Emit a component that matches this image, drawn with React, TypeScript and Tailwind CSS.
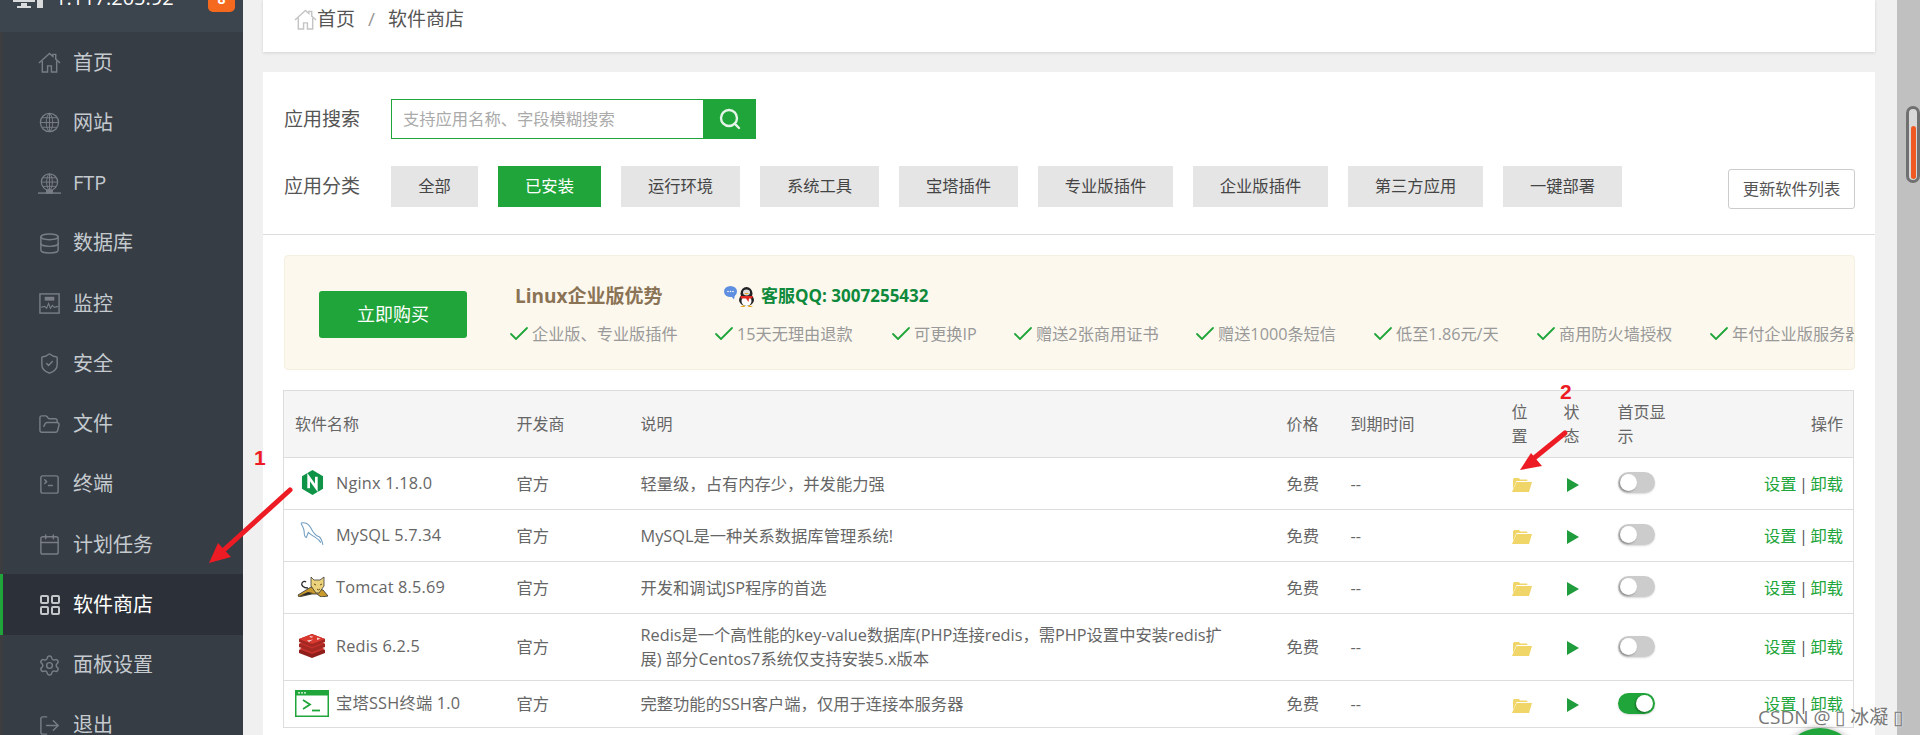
import type { ReactNode } from 'react'
import { Check, Database, FolderOpen, LayoutGrid, LogOut, Search, Settings, ShieldCheck, SquareTerminal, Calendar } from 'lucide-react'

const iconCls = 'w-[23px] h-[23px] text-[#787e84]'

function HomeIcon({ className }: { className: string }) {
  return (
    <svg viewBox="0 0 24 24" className={className} fill="none" stroke="currentColor" strokeWidth="1.5">
      <path d="M1 12.500L12 2.500l3.500 3.200V3.500h3v5L23 12.500" />
      <path d="M4.500 10.500V22H10v-6.500h4V22h5.500V10.500" />
    </svg>
  )
}

function GlobeIcon() {
  return (
    <svg viewBox="0 0 24 24" className={iconCls} fill="none" stroke="currentColor" strokeWidth="1.300">
      <circle cx="12" cy="12" r="9.500" />
      <path d="M12 2.500c-4.500 3-4.500 16 0 19M12 2.500c4.500 3 4.500 16 0 19M12 2.500v19M2.500 12h19M4 7h16M4 17h16" strokeWidth="1" />
    </svg>
  )
}

function FtpIcon() {
  return (
    <svg viewBox="0 0 24 24" className={iconCls} fill="none" stroke="currentColor" strokeWidth="1.300">
      <circle cx="12" cy="10.500" r="8.500" />
      <path d="M12 2c-4 2.500-4 14.500 0 17M12 2c4 2.500 4 14.500 0 17M12 2v17M3.500 10.500h17M5 6h14M5 15h14" strokeWidth="1" />
      <path d="M0 22h24" strokeWidth="1.500" />
      <path d="M9 19.500h6v2.500H9z" fill="currentColor" />
    </svg>
  )
}

function MonitorIcon() {
  return (
    <svg viewBox="0 0 24 24" className={iconCls} fill="none" stroke="currentColor" strokeWidth="1.500">
      <rect x="2" y="2" width="20" height="20" />
      <path d="M7 5h10v4H7z" fill="currentColor" stroke="none" />
      <path d="M3 16l4-1 2 2 2-5 2 5 2-3 2 2 4-1" strokeWidth="1.100" />
    </svg>
  )
}

const menu: { label: string; icon: ReactNode; active?: boolean }[] = [
  { label: '首页', icon: <HomeIcon className={iconCls} /> },
  { label: '网站', icon: <GlobeIcon /> },
  { label: 'FTP', icon: <FtpIcon /> },
  { label: '数据库', icon: <Database className={iconCls} strokeWidth={1.5} /> },
  { label: '监控', icon: <MonitorIcon /> },
  { label: '安全', icon: <ShieldCheck className={iconCls} strokeWidth={1.5} /> },
  { label: '文件', icon: <FolderOpen className={iconCls} strokeWidth={1.5} /> },
  { label: '终端', icon: <SquareTerminal className={iconCls} strokeWidth={1.5} /> },
  { label: '计划任务', icon: <Calendar className={iconCls} strokeWidth={1.5} /> },
  { label: '软件商店', icon: <LayoutGrid className="w-[24px] h-[24px] text-[#c4c7ca]" strokeWidth={2} />, active: true },
  { label: '面板设置', icon: <Settings className={iconCls} strokeWidth={1.5} /> },
  { label: '退出', icon: <LogOut className={iconCls} strokeWidth={1.5} /> },
]

const categories = [
  { label: '全部', w: 'w-[87px]' },
  { label: '已安装', w: 'w-[103px]' },
  { label: '运行环境', w: 'w-[119px]' },
  { label: '系统工具', w: 'w-[119px]' },
  { label: '宝塔插件', w: 'w-[119px]' },
  { label: '专业版插件', w: 'w-[135px]' },
  { label: '企业版插件', w: 'w-[135px]' },
  { label: '第三方应用', w: 'w-[135px]' },
  { label: '一键部署', w: 'w-[119px]' },
]

const perks = [
  { text: '企业版、专业版插件', w: 'w-[205px]' },
  { text: '15天无理由退款', w: 'w-[177px]' },
  { text: '可更换IP', w: 'w-[122px]' },
  { text: '赠送2张商用证书', w: 'w-[182px]' },
  { text: '赠送1000条短信', w: 'w-[178px]' },
  { text: '低至1.86元/天', w: 'w-[163px]' },
  { text: '商用防火墙授权', w: 'w-[173px]' },
  { text: '年付企业版服务器', w: 'w-[170px]' },
]

function NginxLogo() {
  return (
    <svg viewBox="0 0 24 26" className="w-[23px] h-[25px]">
      <path d="M12 0l11 6.500v13L12 26 1 19.500v-13z" fill="#0f9447" />
      <path d="M8 19V7.500L16 18.500V7" fill="none" stroke="#fff" strokeWidth="2.800" />
    </svg>
  )
}

function MysqlLogo() {
  return (
    <svg viewBox="0 0 24 24" className="w-[25px] h-[25px]" fill="none" stroke="#6f9cc0" strokeWidth="1">
      <path d="M1 1C4 0 8 1 10 5c2 4 4 8 8 9 2 1 3 3 4 8" />
      <path d="M1 1c1 3 3 5 3 8 0 3 0 5 2 6 1-2 1-3 2-5 2 2 4 3 7 5 2 1 4 3 5 5" />
    </svg>
  )
}

function TomcatLogo() {
  return (
    <svg viewBox="0 0 31 21" className="w-[31px] h-[21px]">
      <path d="M11 12C6 12 4 9 5 7c1-2 3-2 4-1" fill="none" stroke="#2b2b2b" strokeWidth="1.300" />
      <path d="M14 11L1 19l1 2 8-2 5-1 5 0 4 3 7-1-5-6z" fill="#c99a2c" stroke="#2b2b2b" strokeWidth="0.800" />
      <path d="M2 20l9-4 5 1-6 2z" fill="#2b2b2b" />
      <path d="M14 1l3 3h6l4-3v9l-5 7-3 0-5-7z" fill="#ecd27c" stroke="#3a3a3a" strokeWidth="0.800" />
      <path d="M17 8l2 1M25 8l-2 1M20 13l1.500 1 1.500-1" fill="none" stroke="#5a4510" strokeWidth="0.900" />
    </svg>
  )
}

function RedisLogo() {
  return (
    <svg viewBox="0 0 28 24" className="w-[28px] h-[24px]">
      <path d="M1 16l13-5 13 5v3l-13 5L1 19z" fill="#8f1f1a" />
      <path d="M1 15l13-5 13 5-13 5z" fill="#c6302b" />
      <path d="M1 10l13-5 13 5v3l-13 5-13-5z" fill="#a32722" />
      <path d="M1 9.500l13-5 13 5-13 5z" fill="#c6302b" />
      <path d="M1 5l13-5 13 5v3l-13 5L1 8z" fill="#a32722" />
      <path d="M1 5l13-5 13 5-13 5z" fill="#d9382f" />
      <path d="M12 2l3 .6-1 1.200-2.500-.8zM9 6.500l6-1-4 2.500zM19 3.500l3.500 1.300-3.500 1.300z" fill="#f4d4d1" />
    </svg>
  )
}

function SshLogo() {
  return (
    <svg viewBox="0 0 34 27" className="w-[34px] h-[27px]">
      <rect x="0.750" y="0.750" width="32.500" height="25.500" fill="#fff" stroke="#20a53a" strokeWidth="1.500" />
      <rect x="0" y="0" width="34" height="5.500" fill="#20a53a" />
      <circle cx="4" cy="2.800" r="0.900" fill="#fff" />
      <circle cx="7" cy="2.800" r="0.900" fill="#fff" />
      <circle cx="10" cy="2.800" r="0.900" fill="#fff" />
      <path d="M8 10l7 4.500-7 4.500" fill="none" stroke="#20a53a" strokeWidth="1.800" />
      <path d="M17 20.500h8" stroke="#20a53a" strokeWidth="1.800" />
    </svg>
  )
}

function QqIcon() {
  return (
    <svg viewBox="0 0 31 21" className="w-[31px] h-[21px]">
      <ellipse cx="6.500" cy="5.500" rx="6.500" ry="5.500" fill="#5f8fe0" />
      <path d="M7 10l3 3.500 1-5z" fill="#5f8fe0" />
      <circle cx="4" cy="5.500" r="0.800" fill="#fff" />
      <circle cx="6.500" cy="5.500" r="0.800" fill="#fff" />
      <circle cx="9" cy="5.500" r="0.800" fill="#fff" />
      <ellipse cx="22.500" cy="7.500" rx="6" ry="6.500" fill="#222" />
      <ellipse cx="22.500" cy="14" rx="7.500" ry="6" fill="#222" />
      <ellipse cx="22.500" cy="15" rx="5" ry="5" fill="#fff" />
      <ellipse cx="22.500" cy="6.500" rx="3.500" ry="3" fill="#ddd" />
      <path d="M22.500 8.500l-2.500-1.500h5z" fill="#e8a51c" />
      <path d="M16 10h13l-1 2.500h-3l-.5 3.500-2.500-3.500h-5z" fill="#e02a1f" />
      <path d="M16 21l4-2 1 2zM29 21l-4-2-1 2z" fill="#e8a51c" />
    </svg>
  )
}

function FolderIcon() {
  return (
    <svg viewBox="0 0 20 15" className="w-[20px] h-[15px]">
      <path d="M1 12L1 2.500 2 1h5l1 1.500h7L15.500 4H4.500z" fill="#f0d668" />
      <path d="M4.500 5H20l-3 10H0z" fill="#f0d668" />
    </svg>
  )
}

function Play() {
  return (
    <svg viewBox="0 0 12 14" className="w-[12px] h-[14px]">
      <path d="M0 0l12 7-12 7z" fill="#1f9d3d" />
    </svg>
  )
}

function Toggle({ on }: { on?: boolean }) {
  return (
    <div className={`relative w-[37px] h-[21px] rounded-full -mt-[2px] shadow-[0_1px_2px_rgba(0,0,0,0.15)] ${on ? 'bg-[#20a53a]' : 'bg-[#cccccc]'}`}>
      <div className={`absolute top-[2px] w-[17px] h-[17px] rounded-full bg-white shadow-[-1px_1px_2px_rgba(0,0,0,0.35)] ${on ? 'right-[2px]' : 'left-[2px]'}`} />
    </div>
  )
}

const rows = [
  { logo: <NginxLogo />, name: 'Nginx 1.18.0', desc: '轻量级，占有内存少，并发能力强', h: 'h-[52px]' },
  { logo: <MysqlLogo />, name: 'MySQL 5.7.34', desc: 'MySQL是一种关系数据库管理系统!', h: 'h-[52px]' },
  { logo: <TomcatLogo />, name: 'Tomcat 8.5.69', desc: '开发和调试JSP程序的首选', h: 'h-[52px]' },
  {
    logo: <RedisLogo />,
    name: 'Redis 6.2.5',
    desc: 'Redis是一个高性能的key-value数据库(PHP连接redis，需PHP设置中安装redis扩展) 部分Centos7系统仅支持安装5.x版本',
    h: 'h-[67px]',
  },
  { logo: <SshLogo />, name: '宝塔SSH终端 1.0', desc: '完整功能的SSH客户端，仅用于连接本服务器', h: 'h-[47px]', on: true },
]

const th = 'pl-[11px] pr-[10px] font-normal text-left text-[#666666] text-[16px] leading-[24px] align-middle'
const cell = 'pl-[11px] pr-[10px] text-[16.3px] leading-[24px] align-middle'
const td = `${cell} text-[#666666]`

export default function App() {
  return (
    <div className="relative flex h-[735px] w-full overflow-hidden bg-[#f0f0f0] font-['Open_Sans','Noto_Sans_CJK_SC',sans-serif]">
      <aside className="w-[243px] shrink-0 bg-[#363d45] border-l-[3px] border-[#3b3d3e] flex flex-col">
        <div className="h-[32px] shrink-0 -ml-[3px] bg-[#3c444d] overflow-hidden">
          <div className="flex items-center h-[32px] -mt-[18px] pl-[13px] pr-[8px]">
            <svg viewBox="0 0 30 24" className="w-[30px] h-[24px] -mt-[1px] text-[#d8dadc]" fill="currentColor">
              <path d="M0 1h22v15H0zM2 3v11h18V3zM8 17h6v3h4v2H4v-2h4zM24 1h6v21h-6z" />
            </svg>
            <span className="ml-[12px] text-[20px] leading-[28px] text-white">1.117.205.92</span>
            <span className="ml-auto w-[27px] h-[27px] rounded-[5px] bg-[#f5691f] text-white text-[14px] font-bold flex items-center justify-center">8</span>
          </div>
        </div>
        {menu.map(item => (
          <div
            key={item.label}
            className={`h-[60.25px] shrink-0 flex items-center pl-[35px] pt-[1px] relative ${item.active ? 'bg-[#2c3038] text-white' : 'text-[#c5cacf]'}`}
          >
            {item.active && <div className="absolute -left-[3px] top-0 bottom-0 w-[3px] bg-[#20a53a]" />}
            <span className="w-[35px] flex shrink-0">{item.icon}</span>
            <span className="text-[20px] leading-[28px]">{item.label}</span>
          </div>
        ))}
      </aside>

      <main className="ml-[20px] w-[1612px] shrink-0 flex flex-col gap-[20px]">
        <div className="h-[52px] shrink-0 bg-white shadow-[0_1px_3px_rgba(0,0,0,0.12)] flex items-center pl-[31px] pb-[14px] text-[19px] text-[#555555]">
          <HomeIcon className="w-[23px] h-[23px] text-[#c4c4c4]" />
          <span>首页</span>
          <span className="mx-[13px] text-[#999999]">/</span>
          <span>软件商店</span>
        </div>

        <div className="flex-1 bg-white">
          <div className="border-b border-[#dddddd] h-[163px] pt-[27px]">
            <div className="flex items-center pl-[21px]">
              <span className="w-[107px] text-[19px] text-[#555555]">应用搜索</span>
              <div className="flex h-[40px]">
                <div className="w-[313px] border border-[#20a53a] flex items-center pl-[11px] text-[16.3px] text-[#aaaaaa]">支持应用名称、字段模糊搜索</div>
                <div className="w-[52px] bg-[#20a53a] flex items-center justify-center">
                  <Search className="w-[24px] h-[24px] text-[#e6f5e9]" strokeWidth={2.4} />
                </div>
              </div>
            </div>
            <div className="flex mt-[27px] pl-[21px] pr-[20px]">
              <span className="w-[107px] text-[19px] leading-[41px] text-[#555555]">应用分类</span>
              <div className="flex gap-[20px]">
                {categories.map(c => (
                  <div
                    key={c.label}
                    className={`${c.w} h-[41px] flex items-center justify-center text-[16.3px] ${c.label === '已安装' ? 'bg-[#20a53a] text-white' : 'bg-[#e5e5e5] text-[#444444]'}`}
                  >
                    {c.label}
                  </div>
                ))}
              </div>
              <div className="ml-auto mt-[3px] w-[127px] h-[40px] rounded-[3px] border border-[#cccccc] flex items-center justify-center text-[16.3px] text-[#555555]">
                更新软件列表
              </div>
            </div>
          </div>

          <div className="ml-[21px] mr-[20px] mt-[20px] h-[115px] rounded-[4px] border border-[#f5efe0] bg-[#fcf8ee] flex overflow-hidden">
            <div className="ml-[34px] mt-[35px] w-[148px] h-[47px] shrink-0 rounded-[3px] bg-[#20a53a] text-white text-[18px] flex items-center justify-center">立即购买</div>
            <div className="ml-[42px] min-w-0 flex-1">
              <div className="flex items-center mt-[22px] h-[36px] pl-[6px]">
                <span className="w-[209px] text-[19px] font-bold text-[#8b7355]">Linux企业版优势</span>
                <QqIcon />
                <span className="ml-[6px] text-[17px] font-bold text-[#0f8a3c]">客服QQ: 3007255432</span>
              </div>
              <div className="flex mt-[8px] whitespace-nowrap">
                {perks.map(p => (
                  <div key={p.text} className={`${p.w} flex items-center shrink-0 text-[16.2px] text-[#999999]`}>
                    <Check className="w-[24px] h-[24px] text-[#20a53a] -ml-[2px] mr-[1px]" strokeWidth={1.8} />
                    {p.text}
                  </div>
                ))}
              </div>
            </div>
          </div>

          <table className="ml-[20px] mt-[20px] w-[1570px] table-fixed border-collapse border border-[#dddddd]">
            <colgroup>
              <col className="w-[222px]" />
              <col className="w-[124px]" />
              <col className="w-[646px]" />
              <col className="w-[64px]" />
              <col className="w-[161px]" />
              <col className="w-[52px]" />
              <col className="w-[54px]" />
              <col className="w-[123px]" />
              <col className="w-[124px]" />
            </colgroup>
            <thead>
              <tr className="h-[67px] bg-[#f5f5f5] border-b border-[#dddddd]">
                <th className={th}>软件名称</th>
                <th className={th}>开发商</th>
                <th className={th}>说明</th>
                <th className={th}>价格</th>
                <th className={th}>到期时间</th>
                <th className={th}><div className="w-[16px]">位置</div></th>
                <th className={th}><div className="w-[16px]">状态</div></th>
                <th className={th}><div className="w-[50px]">首页显示</div></th>
                <th className={`${th} text-right`}>操作</th>
              </tr>
            </thead>
            <tbody>
              {rows.map(r => (
                <tr key={r.name} className={`${r.h} border-b border-[#dddddd]`}>
                  <td className={td}>
                    <div className="flex items-center tracking-[0.2px] -mt-[2px]">
                      <span className="w-[34px] mr-[7px] flex justify-center shrink-0">{r.logo}</span>
                      <span className="whitespace-nowrap">{r.name}</span>
                    </div>
                  </td>
                  <td className={td}>官方</td>
                  <td className={td}><div className="max-w-[590px]">{r.desc}</div></td>
                  <td className={td}>免费</td>
                  <td className={td}>--</td>
                  <td className={td}><div className="mt-[2px]"><FolderIcon /></div></td>
                  <td className={td}><div className="pl-[3px] mt-[2px]"><Play /></div></td>
                  <td className={td}><Toggle on={r.on} /></td>
                  <td className={`${cell} text-right text-[#20a53a] whitespace-nowrap`}>设置<span className="mx-[2.5px] text-[#555555]">|</span>卸载</td>
                </tr>
              ))}
            </tbody>
          </table>
        </div>
      </main>

      <div className="ml-[22px] w-[23px] shrink-0 bg-[#c0c0c0] flex justify-end pt-[106px]">
        <div className="w-[14px] h-[77px] rounded-full border-[3px] border-[#707070] bg-[#d8d8d8] flex justify-center items-end pb-[1px]">
          <div className="w-[5px] h-[53px] rounded-full bg-[#f05a22]" />
        </div>
      </div>

      {/* screenshot annotations */}
      <svg className="absolute left-[205px] top-[485px] w-[90px] h-[85px]" viewBox="205 485 90 85">
        <path d="M290 490L225 549" stroke="#ed1c24" strokeWidth="5" strokeLinecap="round" fill="none" />
        <path d="M209 563L218 543 231 557z" fill="#ed1c24" />
      </svg>
      <svg className="absolute left-[1515px] top-[428px] w-[55px] h-[45px]" viewBox="1515 428 55 45">
        <path d="M1565 433L1533 459" stroke="#ed1c24" strokeWidth="5" strokeLinecap="round" fill="none" />
        <path d="M1520 470L1531 453 1542 466z" fill="#ed1c24" />
      </svg>
      <span className="absolute left-[254px] top-[442px] text-[21px] font-bold text-[#ed1c24] font-['Liberation_Sans',sans-serif]">1</span>
      <span className="absolute left-[1560px] top-[376px] text-[21px] font-bold text-[#ed1c24] font-['Liberation_Sans',sans-serif]">2</span>

      <div className="absolute left-[1782px] top-[728px] w-[76px] h-[76px] rounded-full bg-[#20a53a] shadow-[0_0_6px_rgba(0,0,0,0.35)]" />
      <span className="absolute left-[1758px] top-[702px] text-[19px] leading-[30px] text-[#777777] whitespace-nowrap [text-shadow:0_0_2px_#ffffff]">CSDN @ ▯ 冰凝 ▯</span>
    </div>
  )
}
